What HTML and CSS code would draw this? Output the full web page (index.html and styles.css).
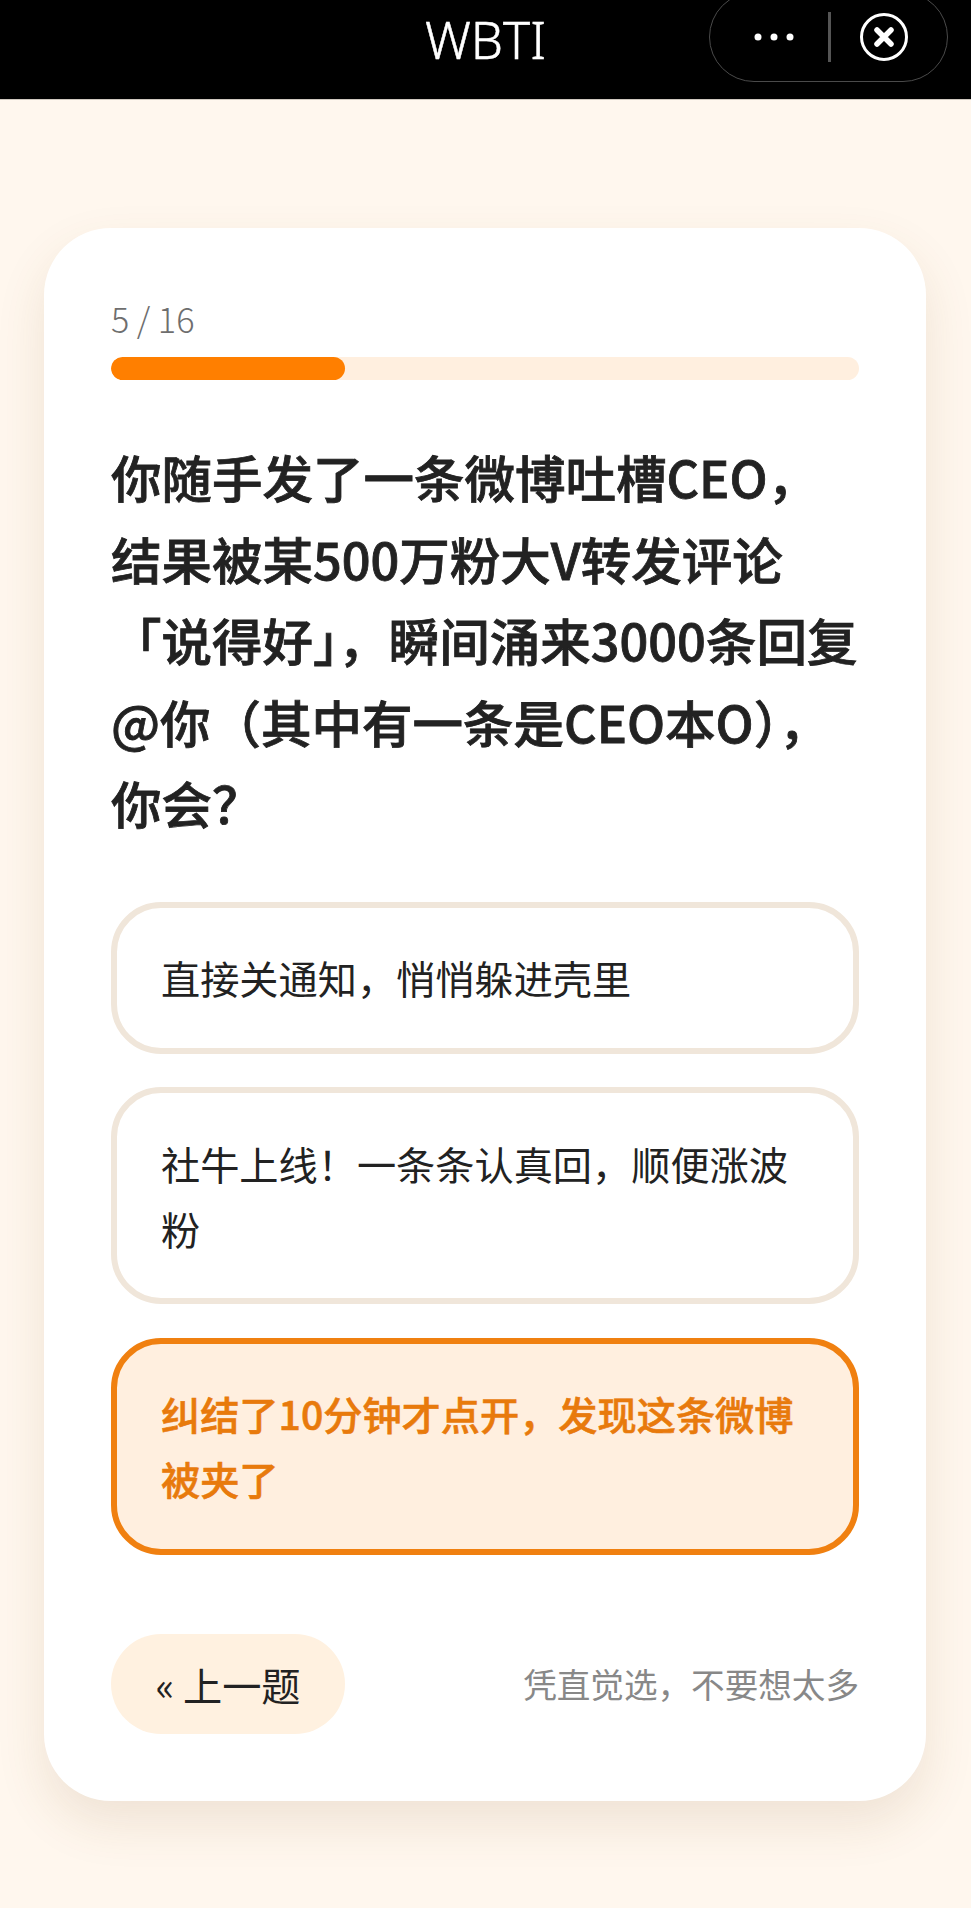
FILE: index.html
```html
<!DOCTYPE html>
<html lang="zh-CN">
<head>
    <meta charset="UTF-8">
    <meta name="viewport" content="width=device-width, initial-scale=1.0">
    <title>WBTI</title>
    <link rel="stylesheet" href="styles.css">
</head>
<body>
    <header class="topbar">
        <div class="topbar-title">WBTI</div>
        <div class="capsule">
            <svg class="capsule-more" width="42" height="10" viewBox="0 0 42 10">
                <circle cx="5" cy="5" r="3.5" fill="#fff"/>
                <circle cx="21" cy="5" r="3.5" fill="#fff"/>
                <circle cx="37" cy="5" r="3.5" fill="#fff"/>
            </svg>
            <span class="capsule-line"></span>
            <svg class="capsule-close" width="50" height="50" viewBox="0 0 50 50">
                <circle cx="25" cy="25" r="22.5" fill="none" stroke="#fff" stroke-width="3"/>
                <path d="M18 18 L32 32 M32 18 L18 32" fill="none" stroke="#fff" stroke-width="5.5" stroke-linecap="round"/>
            </svg>
        </div>
    </header>

    <main class="page">
        <section class="card">
            <div class="progress-text">5 / 16</div>
            <div class="progress-bar"><div class="progress-fill" style="width: 31.25%"></div></div>

            <h1 class="question">你随手发了一条微博吐槽CEO，<br>结果被某500万粉大V转发评论<br>「说得好」，瞬间涌来3000条回复<br>@你（其中有一条是CEO本O），<br>你会？</h1>

            <div class="options">
                <div class="option">直接关通知，悄悄躲进壳里</div>
                <div class="option">社牛上线！一条条认真回，顺便涨波粉</div>
                <div class="option option-active">纠结了10分钟才点开，发现这条微博被夹了</div>
            </div>

            <div class="card-footer">
                <button class="prev-btn">« 上一题</button>
                <span class="hint">凭直觉选，不要想太多</span>
            </div>
        </section>
    </main>
</body>
</html>
```

FILE: styles.css
```css
* {
    box-sizing: border-box;
}
body {
    margin: 0;
    min-height: 1908px;
    background-color: #fff7ee;
    color: #222;
    font-family: "Noto Sans CJK SC", "Noto Sans", sans-serif;
}
.topbar {
    position: relative;
    height: 100px;
    background-color: #000;
    border-bottom: 1px solid #cfc8bf;
    overflow: hidden;
}
.topbar-title {
    color: #fff;
    font-family: "Noto Sans", sans-serif;
    font-size: 51px;
    font-weight: 300;
    line-height: 78px;
    text-align: center;
    -webkit-text-stroke: 0.5px #fff;
}
.capsule {
    position: absolute;
    top: -8px;
    left: 709px;
    width: 239px;
    height: 90px;
    border: 1.5px solid #4a4a4a;
    border-radius: 45px;
    display: flex;
    align-items: center;
}
.capsule-more {
    margin-left: 43px;
}
.capsule-line {
    width: 3px;
    height: 50px;
    margin-left: 33px;
    background-color: #555;
}
.capsule-close {
    margin-left: 28px;
}
.page {
    padding: 128px 45px 0 44px;
}
.card {
    height: 1573px;
    padding: 67px;
    background-color: #fff;
    border-radius: 67px;
    box-shadow: 0 22px 50px rgba(120, 80, 30, 0.12);
}
.progress-text {
    color: #6e6e6e;
    font-size: 34.2px;
    font-weight: 300;
    line-height: 48px;
    margin-top: -1px;
}
.progress-bar {
    height: 23px;
    margin-top: 15px;
    background-color: #ffefdf;
    border-radius: 12px;
    overflow: hidden;
}
.progress-fill {
    height: 100%;
    background-color: #ff7f00;
    border-radius: 12px;
}
.question {
    margin: 56px 0 0;
    color: #222;
    font-size: 50.5px;
    font-weight: 500;
    line-height: 81.5px;
    -webkit-text-stroke: 0.8px #222;
}
.options {
    display: flex;
    flex-direction: column;
    gap: 33.6px;
    margin-top: 58px;
}
.option {
    padding: 37.5px 44px;
    background-color: #fff;
    border: 6px solid #f0e6da;
    border-radius: 50px;
    font-size: 39.2px;
    line-height: 65px;
}
.option-active {
    background-color: #ffefdf;
    border-color: #f08010;
    color: #e87a0c;
    font-weight: 500;
    -webkit-text-stroke: 0.6px #e87a0c;
}
.card-footer {
    display: flex;
    justify-content: space-between;
    align-items: center;
    margin-top: 79px;
}
.prev-btn {
    width: 234px;
    height: 100px;
    padding: 0;
    background-color: #fff1e0;
    border: 0;
    border-radius: 50px;
    color: #222;
    font-family: inherit;
    font-size: 39.2px;
}
.hint {
    color: #888;
    font-size: 33.6px;
}
```
